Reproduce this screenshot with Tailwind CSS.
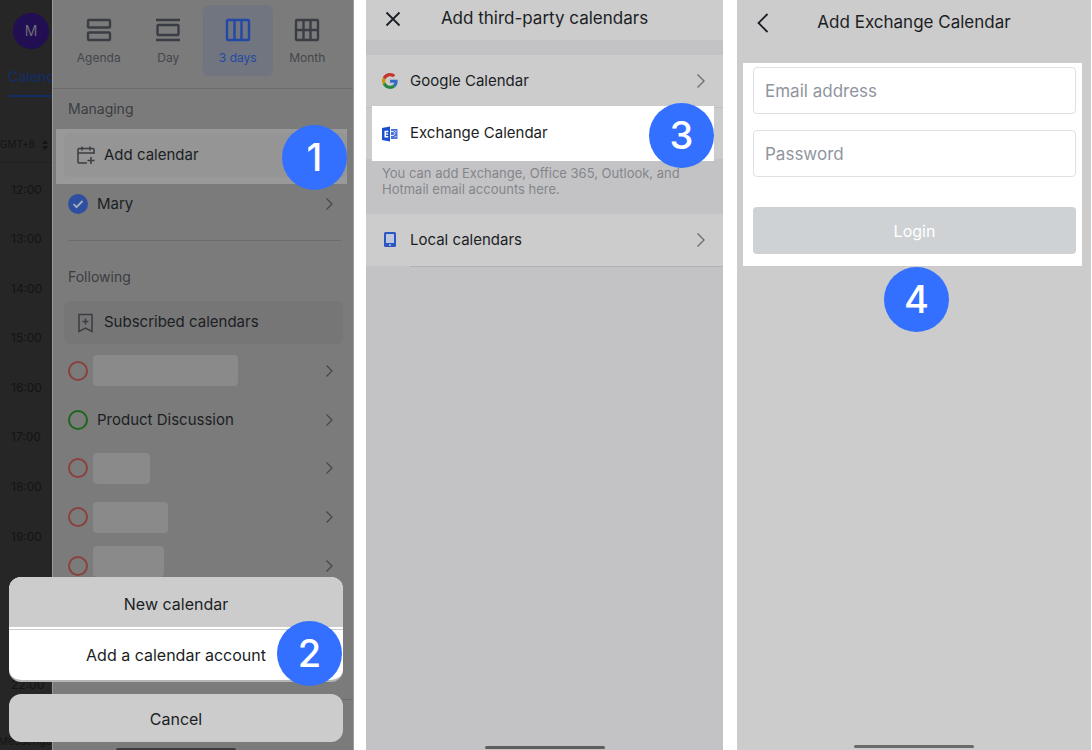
<!DOCTYPE html>
<html lang="en">
<head>
  <meta charset="UTF-8">
  <title>Add Exchange Calendar</title>
  <meta name="viewport" content="width=device-width, initial-scale=1.0">
  <script src="https://cdn.jsdelivr.net/npm/@tailwindcss/browser@4"></script>
</head>
<body class="bg-white font-['Inter','Roboto',sans-serif]">
<main class="grid h-screen min-h-[750px] grid-cols-[354fr_357fr_356fr] gap-x-3 pr-px text-[#1b1e24]">

  <!-- Step 1 and 2: calendar drawer with action sheet -->
  <section class="relative flex overflow-hidden bg-[#262626]">
    <div class="w-[52px] shrink-0 overflow-hidden text-xs whitespace-nowrap text-[#141414]">
      <div class="mt-[13px] ml-[13px] flex size-9 items-center justify-center rounded-full bg-[#220e52] text-sm text-[#6f6c78]">M</div>
      <div class="mt-[18px] ml-2 border-b-2 border-[#142c64] pb-2 text-sm leading-5 font-medium text-[#142c64]">Calendar</div>
      <div class="mt-9 flex h-6 items-center gap-1 text-[10px]">GMT+8
        <svg class="size-3 shrink-0" viewBox="0 0 12 12" fill="currentColor"><path d="M6 1l3 4H3zM6 11l3-4H3z"/></svg>
      </div>
      <div class="mt-[5px] border-t border-[#202020]"></div>
      <div class="mt-0.5 grid h-[545px] grid-rows-11 items-center pl-[11px]">
        <span>12:00</span>
        <span>13:00</span>
        <span>14:00</span>
        <span>15:00</span>
        <span>16:00</span>
        <span>17:00</span>
        <span>18:00</span>
        <span>19:00</span>
        <span>20:00</span>
        <span>21:00</span>
        <span>22:00</span>
      </div>
      <div class="mt-6 -ml-0.5 text-[11px]">Messenger</div>
    </div>

    <div class="min-w-0 flex-1 border-x border-x-[#9a9a9a] bg-[#7b7b7b]">
      <nav class="grid grid-cols-4 border-b border-[#6c6c6c] px-[11px] pt-[5px] pb-3 text-xs text-[#43464b]">
        <button class="flex h-[71px] flex-col items-center gap-[5px] rounded-md pt-3">
          <svg class="size-7 text-[#3a3e44]" viewBox="0 0 28 28" fill="none" stroke="currentColor" stroke-width="2.400"><rect x="3" y="3" width="22" height="7.500" rx="1"/><rect x="3" y="15.500" width="22" height="7.500" rx="1"/></svg>
          <span>Agenda</span>
        </button>
        <button class="flex h-[71px] flex-col items-center gap-[5px] rounded-md pt-3">
          <svg class="size-7 text-[#3a3e44]" viewBox="0 0 28 28" fill="none" stroke="currentColor" stroke-width="2.400"><path d="M2 3h24M2 23h24"/><rect x="3.500" y="8" width="21" height="10" rx="1"/></svg>
          <span>Day</span>
        </button>
        <button class="flex h-[71px] flex-col items-center gap-[5px] rounded-md bg-[#70757f] pt-3 text-[#2348a5]">
          <svg class="size-7" viewBox="0 0 28 28" fill="none" stroke="currentColor" stroke-width="2.400"><rect x="3" y="3" width="22" height="20" rx="1"/><path d="M10.500 3v20M17.500 3v20"/></svg>
          <span>3 days</span>
        </button>
        <button class="flex h-[71px] flex-col items-center gap-[5px] rounded-md pt-3">
          <svg class="size-7 text-[#3a3e44]" viewBox="0 0 28 28" fill="none" stroke="currentColor" stroke-width="2.400"><rect x="3" y="3" width="22" height="20" rx="1"/><path d="M10.500 3v20M17.500 3v20M3 13h22"/></svg>
          <span>Month</span>
        </button>
      </nav>

      <h2 class="flex h-10 items-center pl-[15px] text-sm text-[#3a3d42]">Managing</h2>
      <div class="relative mr-1.5 ml-[3px] h-[55px] bg-[#999999] py-1 pl-2">
        <button class="flex h-11 w-full items-center gap-2 rounded-md bg-[#959595] pl-3 text-[15px]">
          <svg class="size-5 text-[#3a3d42]" viewBox="0 0 20 20" fill="none" stroke="currentColor" stroke-width="1.500"><path d="M18 9V4.500a1 1 0 0 0-1-1H3a1 1 0 0 0-1 1V17a1 1 0 0 0 1 1h8M2 8h16M6 1.500v4M14 1.500v4M15 12v7M11.500 15.500h7"/></svg>
          Add calendar
        </button>
        <span class="absolute -top-1 right-0 flex size-[65px] items-center justify-center rounded-full bg-[#3370ff] text-[38px] font-medium text-white">1</span>
      </div>
      <div class="flex h-10 items-center pr-4 pl-[15px]">
        <label class="flex flex-1 items-center gap-[9px] text-[15px]">
          <span class="grid size-5 items-center justify-items-center">
            <input type="checkbox" checked class="size-5 appearance-none rounded-full bg-[#2c4f9f] [grid-area:1/1]">
            <svg class="size-3 text-[#a9aebb] [grid-area:1/1]" viewBox="0 0 12 12" fill="none" stroke="currentColor" stroke-width="1.800"><path d="M1.500 6l3 3.200L10.500 3"/></svg>
          </span>
          Mary
        </label>
        <svg class="size-4 text-[#43464b]" viewBox="0 0 16 16" fill="none" stroke="currentColor" stroke-width="1.200"><path d="M5.500 2.500L11 8l-5.500 5.500"/></svg>
      </div>
      <div class="mt-4 mr-3 ml-[15px] border-t border-[#6c6c6c]"></div>

      <h2 class="mt-4 flex h-10 items-center pl-[15px] text-sm text-[#3a3d42]">Following</h2>
      <div class="mt-1 mr-2.5 ml-[11px]">
        <button class="flex h-[43px] w-full items-center gap-2 rounded-md bg-[#767676] pl-3 text-[15px]">
          <svg class="size-5 text-[#3a3d42]" viewBox="0 0 20 20" fill="none" stroke="currentColor" stroke-width="1.500"><path d="M3 1.500h13v17l-6.500-3.500L3 18.500zM9.500 5.500v6M6.500 8.500h6"/></svg>
          Subscribed calendars
        </button>
      </div>
      <ul class="mt-[3px] grid h-[243px] grid-rows-5 pr-4 pl-[15px] text-[15px]">
        <li class="flex items-center gap-[5px]">
          <input type="checkbox" aria-label="Calendar" class="size-5 appearance-none rounded-full border-2 border-[#8a403c]">
          <span class="mb-0.5 h-[31px] w-[145px] rounded bg-[#8a8a8a]"></span>
          <svg class="ml-auto size-4 text-[#43464b]" viewBox="0 0 16 16" fill="none" stroke="currentColor" stroke-width="1.200"><path d="M5.500 2.500L11 8l-5.500 5.500"/></svg>
        </li>
        <li class="flex items-center">
          <label class="flex items-center gap-[9px]">
            <input type="checkbox" class="size-5 appearance-none rounded-full border-2 border-[#1c671c]">
            Product Discussion
          </label>
          <svg class="ml-auto size-4 text-[#43464b]" viewBox="0 0 16 16" fill="none" stroke="currentColor" stroke-width="1.200"><path d="M5.500 2.500L11 8l-5.500 5.500"/></svg>
        </li>
        <li class="flex items-center gap-[5px]">
          <input type="checkbox" aria-label="Calendar" class="size-5 appearance-none rounded-full border-2 border-[#8a403c]">
          <span class="h-[31px] w-[57px] rounded bg-[#8a8a8a]"></span>
          <svg class="ml-auto size-4 text-[#43464b]" viewBox="0 0 16 16" fill="none" stroke="currentColor" stroke-width="1.200"><path d="M5.500 2.500L11 8l-5.500 5.500"/></svg>
        </li>
        <li class="flex items-center gap-[5px]">
          <input type="checkbox" aria-label="Calendar" class="size-5 appearance-none rounded-full border-2 border-[#8a403c]">
          <span class="h-[31px] w-[75px] rounded bg-[#8a8a8a]"></span>
          <svg class="ml-auto size-4 text-[#43464b]" viewBox="0 0 16 16" fill="none" stroke="currentColor" stroke-width="1.200"><path d="M5.500 2.500L11 8l-5.500 5.500"/></svg>
        </li>
        <li class="flex items-center gap-[5px]">
          <input type="checkbox" aria-label="Calendar" class="size-5 appearance-none rounded-full border-2 border-[#8a403c]">
          <span class="mb-2 h-[31px] w-[71px] rounded bg-[#8a8a8a]"></span>
          <svg class="ml-auto size-4 text-[#43464b]" viewBox="0 0 16 16" fill="none" stroke="currentColor" stroke-width="1.200"><path d="M5.500 2.500L11 8l-5.500 5.500"/></svg>
        </li>
      </ul>
      <div class="mt-[109px] border-t border-[#6c6c6c]"></div>
    </div>

    <!-- action sheet -->
    <div class="absolute inset-x-0 bottom-0 pr-[11px] pl-[9px] text-base">
      <div class="flex flex-col overflow-hidden rounded-xl border-b-2 border-[#b5b5b5] bg-white">
        <button class="h-[50px] bg-[#cccccc] pt-1">New calendar</button>
        <button class="mt-0.5 h-[51px] border-t border-[#cccccc]">Add a calendar account</button>
      </div>
      <button class="mt-3 block h-12 w-full rounded-xl bg-[#cccccc] pt-0.5">Cancel</button>
      <div class="mx-auto mt-1.5 h-0.5 w-[120px] rounded-t bg-[#3c3c3c]"></div>
      <span class="absolute top-11 right-3 flex size-[65px] items-center justify-center rounded-full bg-[#3370ff] text-[38px] font-medium text-white">2</span>
    </div>
  </section>

  <!-- Step 3: account type list -->
  <section class="flex flex-col bg-[#c3c3c5]">
    <header class="grid h-10 grid-cols-[44px_1fr_44px] items-center bg-[#cccccc] pb-0.5">
      <button aria-label="Close" class="pl-[18px]">
        <svg class="size-[18px]" viewBox="0 0 18 18" fill="none" stroke="currentColor" stroke-width="1.800"><path d="M2.500 2.500l13 13M15.500 2.500l-13 13"/></svg>
      </button>
      <h1 class="text-center text-[17px]">Add third-party calendars</h1>
    </header>
    <a href="#" class="mt-[15px] flex h-[52px] items-center gap-3 bg-[#cccccc] pr-3.5 pl-4 text-[15px]">
      <svg class="size-4" viewBox="0 0 48 48"><path fill="#c5352b" d="M24 9.500c3.540 0 6.710 1.220 9.210 3.600l6.850-6.850C35.900 2.380 30.470 0 24 0 14.620 0 6.510 5.380 2.560 13.220l7.980 6.190C12.430 13.720 17.740 9.500 24 9.500z"/><path fill="#356bc4" d="M46.980 24.550c0-1.570-.15-3.090-.38-4.550H24v9.020h12.940c-.58 2.960-2.260 5.480-4.780 7.180l7.730 6c4.510-4.180 7.090-10.360 7.090-17.650z"/><path fill="#c99604" d="M10.530 28.590c-.48-1.450-.76-2.990-.76-4.590s.27-3.140.76-4.590l-7.980-6.190C.92 16.460 0 20.120 0 24c0 3.880.92 7.540 2.560 10.780l7.970-6.190z"/><path fill="#2a8643" d="M24 48c6.480 0 11.930-2.130 15.890-5.810l-7.730-6c-2.150 1.450-4.920 2.300-8.160 2.300-6.260 0-11.570-4.220-13.470-9.910l-7.980 6.190C6.510 42.620 14.620 48 24 48z"/></svg>
      Google Calendar
      <svg class="ml-auto size-4 text-[#6a6e75]" viewBox="0 0 16 16" fill="none" stroke="currentColor" stroke-width="1.400"><path d="M4.500 1.500L11 8l-6.500 6.500"/></svg>
    </a>
    <div class="relative flex h-[52px] items-center border-t border-[#c0c0c2] bg-[#cccccc] pr-[9px] pl-1.5">
      <a href="#" class="-my-1 flex h-[55px] flex-1 items-center gap-3 bg-white pl-2.5 text-[15px]">
        <svg class="size-4" viewBox="0 0 16 16"><path fill="#1c4fcf" d="M0 2l8-1.500v15L0 14z"/><path fill="#fff" d="M2.500 4.800h3.800v1.400H4v1.200h2.100v1.300H4v1.300h2.300v1.400H2.500z"/><path fill="#4a72d8" d="M9 3h6.500v10H9z"/><path fill="none" stroke="#fff" stroke-width=".9" d="M9 5.500h2.500l1.500 2-1.500 2H9M13 4.500l1.300 1.500M13 11.500l1.300-1.500"/></svg>
        Exchange Calendar
      </a>
      <span class="absolute -top-[5px] right-[9px] flex size-[65px] items-center justify-center rounded-full bg-[#3370ff] text-[38px] font-medium text-white">3</span>
    </div>
    <p class="h-[55px] px-4 pt-1.5 text-[13px] leading-4 text-[#83868c]">You can add Exchange, Office 365, Outlook, and<br>Hotmail email accounts here.</p>
    <a href="#" class="flex h-[52px] items-center gap-3 bg-[#cccccc] pr-3.5 pl-4 text-[15px]">
      <svg class="size-4" viewBox="0 0 16 16"><rect x="2" y="0" width="12" height="15" rx="1.500" fill="#2a57c4"/><rect x="4" y="2" width="8" height="9" fill="#bdc7dd"/><rect x="7" y="12.300" width="2" height="1.400" fill="#cccccc"/></svg>
      Local calendars
      <svg class="ml-auto size-4 text-[#6a6e75]" viewBox="0 0 16 16" fill="none" stroke="currentColor" stroke-width="1.400"><path d="M4.500 1.500L11 8l-6.500 6.500"/></svg>
    </a>
    <div class="ml-11 border-t border-[#b2b2b4]"></div>
    <div class="mx-auto mt-auto mb-px h-[3px] w-[120px] rounded-full bg-[#5e5e5f]"></div>
  </section>

  <!-- Step 4: login form -->
  <section class="ml-0.5 flex flex-col bg-[#cccccc]">
    <header class="grid h-[63px] grid-cols-[44px_1fr_44px] items-center pb-[18px]">
      <button aria-label="Back" class="pl-4">
        <svg class="size-5" viewBox="0 0 20 20" fill="none" stroke="currentColor" stroke-width="1.800"><path d="M14.500 1L5.500 10l9 9"/></svg>
      </button>
      <h1 class="text-center text-[17px]">Add Exchange Calendar</h1>
    </header>
    <form class="relative mr-[9px] ml-1.5 flex flex-col gap-4 bg-white pt-1 pr-1.5 pb-3 pl-2.5 text-[17px]">
      <input type="email" aria-label="Email address" placeholder="Email address" class="h-[47px] rounded border border-[#dee0e3] px-[11px] placeholder:text-[#8f959e]">
      <input type="password" aria-label="Password" placeholder="Password" class="h-[47px] rounded border border-[#dee0e3] px-[11px] placeholder:text-[#8f959e]">
      <button type="button" class="mt-3.5 h-[47px] rounded bg-[#ced2d5] text-base text-white">Login</button>
      <span class="absolute top-full left-[141px] mt-px flex size-[65px] items-center justify-center rounded-full bg-[#3370ff] text-[38px] font-medium text-white">4</span>
    </form>
    <div class="mx-auto mt-auto mb-0.5 h-[3px] w-[120px] rounded-full bg-[#6a6a6a]"></div>
  </section>

</main>
</body>
</html>
